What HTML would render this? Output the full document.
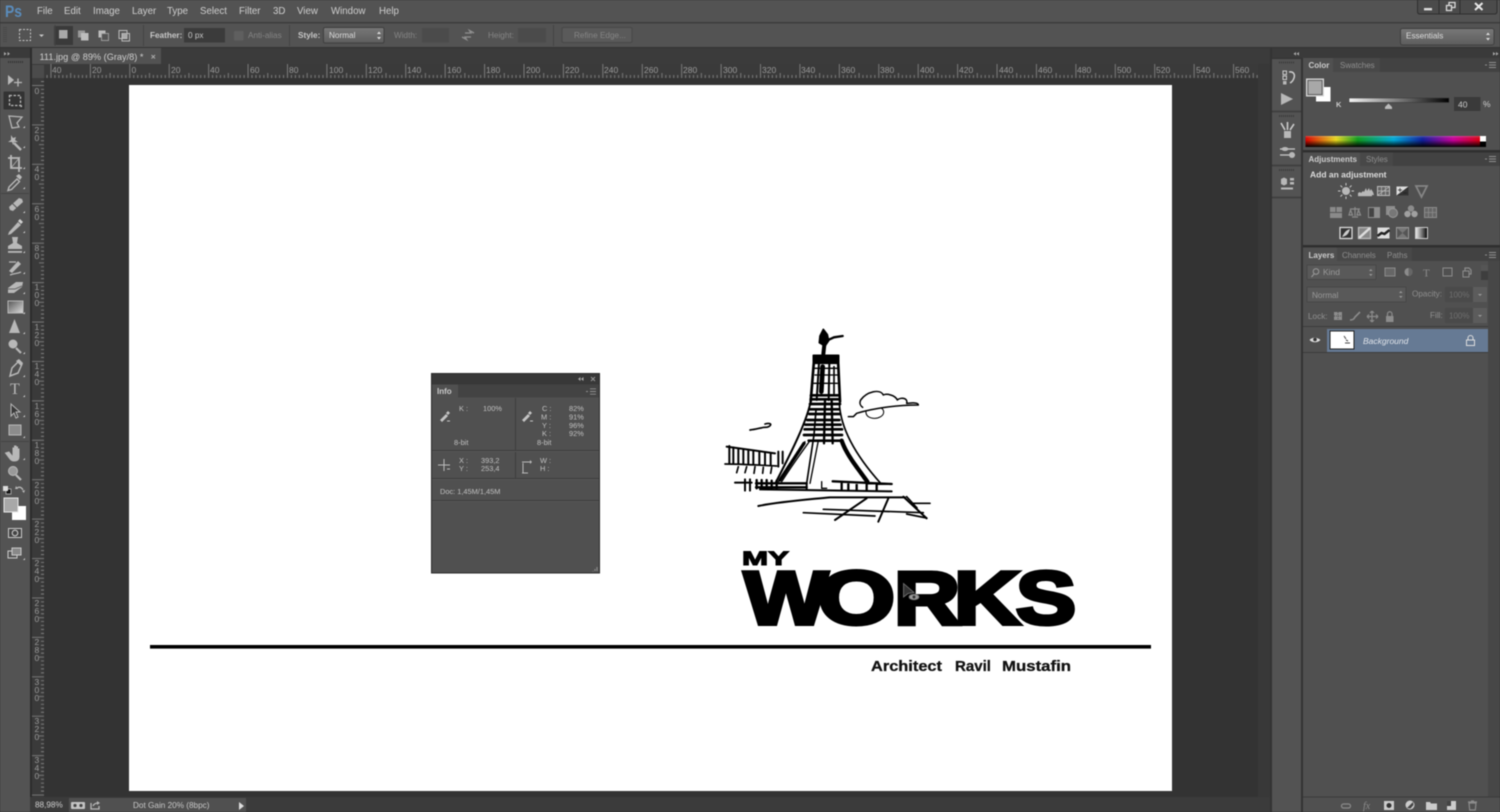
<!DOCTYPE html>
<html><head><meta charset="utf-8"><style>
html,body{margin:0;padding:0;width:1500px;height:812px;overflow:hidden;background:#333}
svg{display:block;filter:blur(.5px)}
svg svg{filter:none}
text{font-family:"Liberation Sans",sans-serif;font-size:8.5px;fill:#c8c8c8}
.m text{font-size:9.7px;fill:#cfcfcf}
.d text{fill:#858585}
.r text{fill:#9a9a9a;font-size:8.5px}
.i text{font-size:7.4px;fill:#c0c0c0}
.t text{font-size:8px}
.ic{fill:#b8b8b8;stroke:none}
.is{fill:none;stroke:#b8b8b8;stroke-width:1.3}
.dim{fill:#8c8c8c}
.dims{fill:none;stroke:#8c8c8c;stroke-width:1.2}
.w{font-weight:bold;fill:#000;stroke:#000;stroke-width:4;stroke-linejoin:miter;font-size:75px}
</style></head><body>
<svg width="1500" height="812" viewBox="0 0 1500 812" xmlns="http://www.w3.org/2000/svg">
<defs>
<pattern id="hr" x="129.3" y="64" width="39.42" height="14" patternUnits="userSpaceOnUse">
<path d="M.5 0V14M20.2 9V14M4.4 11V14M8.4 11V14M12.3 11V14M16.3 11V14M24.1 11V14M28.1 11V14M32 11V14M36 11V14" stroke="#8a8a8a" stroke-width=".8"/>
</pattern>
<pattern id="vr" x="32" y="85" width="12" height="39.42" patternUnits="userSpaceOnUse">
<path d="M0 .5H12M7 20.2H12M9 4.4H12M9 8.4H12M9 12.3H12M9 16.3H12M9 24.1H12M9 28.1H12M9 32H12M9 36H12" stroke="#8a8a8a" stroke-width=".8"/>
</pattern>
<linearGradient id="sel" x1="0" y1="0" x2="0" y2="1"><stop offset="0" stop-color="#787878"/><stop offset="1" stop-color="#5d5d5d"/></linearGradient>
<linearGradient id="sld" x1="0" y1="0" x2="1" y2="0"><stop offset="0" stop-color="#f4f4f4"/><stop offset="1" stop-color="#000"/></linearGradient>
<linearGradient id="spec" x1="0" y1="0" x2="1" y2="0">
<stop offset="0" stop-color="#e00000"/><stop offset=".17" stop-color="#f0e020"/><stop offset=".29" stop-color="#10a020"/><stop offset=".49" stop-color="#00b0e0"/><stop offset=".65" stop-color="#1020a0"/><stop offset=".82" stop-color="#d000a0"/><stop offset=".97" stop-color="#e00010"/><stop offset="1" stop-color="#e00010"/></linearGradient>
<linearGradient id="fade" x1="0" y1="0" x2="0" y2="1"><stop offset="0" stop-color="#fff" stop-opacity=".25"/><stop offset=".35" stop-color="#000" stop-opacity="0"/><stop offset="1" stop-color="#000" stop-opacity="1"/></linearGradient>
<linearGradient id="gr" x1="0" y1="0" x2="1" y2="1"><stop offset="0" stop-color="#555"/><stop offset="1" stop-color="#ddd"/></linearGradient>
</defs>

<!-- base -->
<rect width="1500" height="812" fill="#535353"/>
<rect y="22" width="1500" height="1.5" fill="#3d3d3d"/>
<rect y="47" width="1500" height="1.5" fill="#333"/>

<!-- menu -->
<text x="5" y="17" textLength="17" lengthAdjust="spacingAndGlyphs" style="font-size:17px;font-weight:bold;fill:#5a8cbc">Ps</text>
<g class="m">
<text x="37" y="14">File</text><text x="64" y="14">Edit</text><text x="93" y="14">Image</text><text x="132" y="14">Layer</text><text x="167" y="14">Type</text><text x="200" y="14">Select</text><text x="239" y="14">Filter</text><text x="273" y="14">3D</text><text x="297" y="14">View</text><text x="331" y="14">Window</text><text x="379" y="14">Help</text>
</g>

<!-- window buttons -->
<path d="M1417.5 0V11.5Q1417.5 14 1420 14H1494.5Q1497 14 1497 11.5V0" fill="#4b4b4b" stroke="#2e2e2e"/>
<path d="M1439 0V14M1460 0V14" stroke="#2e2e2e"/>
<rect x="1424" y="8" width="8" height="2.4" fill="#ddd"/>
<path d="M1446.5 5.5h5v5h-5zM1449 5V2.5h6v5h-3" fill="none" stroke="#ddd" stroke-width="1.3"/>
<path d="M1475 3l7.5 7M1482.5 3l-7.5 7" stroke="#e8e8e8" stroke-width="2"/>

<!-- options bar -->
<path d="M4 27v16M6 27v16" stroke="#3f3f3f" stroke-dasharray="1 1"/>
<rect x="19.5" y="29.5" width="11" height="11" fill="none" stroke="#c8c8c8" stroke-dasharray="2 1.5"/>
<path d="M39 34.5h5l-2.5 2.5z" fill="#c8c8c8"/>
<rect x="54" y="26" width="19" height="19" fill="#3a3a3a"/>
<rect x="59" y="30" width="8.5" height="8.5" fill="#a8a8a8"/>
<rect x="78" y="30.5" width="7" height="7" fill="#999"/><rect x="81" y="33" width="7.5" height="7.5" fill="#bdbdbd"/>
<rect x="98.5" y="30.5" width="7" height="7" fill="#bdbdbd"/><rect x="101.5" y="33.5" width="7" height="7" fill="#555" stroke="#aaa" stroke-width=".8"/>
<rect x="119" y="30.5" width="8" height="8" fill="none" stroke="#bbb"/><rect x="122" y="33.5" width="7.5" height="7.5" fill="none" stroke="#bbb"/><rect x="122.5" y="33.5" width="4.5" height="4.5" fill="#aaa"/>
<path d="M55 25V46M143.5 25V46M289.5 25V46M553.5 25V46" stroke="#444"/>
<text x="150" y="38" style="font-weight:bold;font-size:8.2px">Feather:</text>
<rect x="184" y="28" width="41" height="14.5" fill="#3b3b3b"/>
<text x="188" y="38" style="font-size:8.2px">0 px</text>
<rect x="234" y="31" width="9.5" height="9.5" rx="1" fill="#5f5f5f"/>
<rect x="562" y="27.5" width="70" height="15" rx="1.5" fill="#5a5a5a" stroke="#474747"/>
<g class="d"><text x="248" y="38" style="font-size:8.2px">Anti-alias</text><text x="394" y="38" style="font-size:8.2px">Width:</text><text x="488" y="38" style="font-size:8.2px">Height:</text><text x="574" y="38" style="font-size:8.2px">Refine Edge...</text></g>
<text x="298" y="38" style="font-weight:bold;font-size:8.2px">Style:</text>
<rect x="323.5" y="27.5" width="60.5" height="15.5" rx="1.5" fill="url(#sel)" stroke="#3f3f3f"/>
<text x="329" y="38" style="font-size:8.2px;fill:#ddd">Normal</text>
<path d="M377 34l2-2.5 2 2.5zM377 37l2 2.5 2-2.5z" fill="#ddd"/>
<rect x="422" y="28" width="27" height="14.5" fill="#4b4b4b"/>
<rect x="518" y="28" width="28" height="14.5" fill="#4b4b4b"/>
<path d="M465 33h6l-1.5-2.5L474 33M471 37h-6l1.5 2.5L462 37" fill="none" stroke="#8f8f8f" stroke-width="1.3"/>
<rect x="1400.5" y="28.5" width="93.5" height="16.5" rx="2" fill="url(#sel)" stroke="#3f3f3f"/>
<text x="1406" y="38.5" style="font-size:8.2px;fill:#ddd">Essentials</text>
<path d="M1486 35l2-2.5 2 2.5zM1486 38l2 2.5 2-2.5z" fill="#ddd"/>

<!-- document area -->
<rect x="30" y="48" width="1242" height="764" fill="#333"/>
<rect x="32" y="48" width="1238" height="16" fill="#3b3b3b"/>
<rect x="32" y="48" width="129" height="16" fill="#525252"/>
<text x="39.5" y="60" style="font-size:9.2px;fill:#cfcfcf">111.jpg @ 89% (Gray/8) *</text>
<path d="M151.5 55l3.5 3.5M155 55l-3.5 3.5" stroke="#aaa"/>
<rect x="32" y="64" width="1226" height="14" fill="#3a3a3a"/>
<rect x="32" y="65" width="12" height="13" fill="#4b4b4b"/>
<rect x="44" y="64" width="1214" height="14" fill="url(#hr)"/>
<rect x="32" y="78" width="12" height="719" fill="#3a3a3a"/>
<rect x="32" y="78" width="12" height="719" fill="url(#vr)"/>
<rect x="1258" y="64" width="12" height="733" fill="#383838"/>
<g class="r">
<text x="52" y="73">40</text><text x="92" y="73">20</text><text x="131.5" y="73">0</text><text x="171" y="73">20</text><text x="210" y="73">40</text><text x="250" y="73">60</text><text x="289" y="73">80</text><text x="329" y="73">100</text><text x="368" y="73">120</text><text x="407" y="73">140</text><text x="447" y="73">160</text><text x="486" y="73">180</text><text x="526" y="73">200</text><text x="565" y="73">220</text><text x="604" y="73">240</text><text x="644" y="73">260</text><text x="683" y="73">280</text><text x="723" y="73">300</text><text x="762" y="73">320</text><text x="801" y="73">340</text><text x="841" y="73">360</text><text x="880" y="73">380</text><text x="920" y="73">400</text><text x="959" y="73">420</text><text x="999" y="73">440</text><text x="1038" y="73">460</text><text x="1077" y="73">480</text><text x="1117" y="73">500</text><text x="1156" y="73">520</text><text x="1196" y="73">540</text><text x="1235" y="73">560</text>
<text x="34.5" y="94">0</text>
<text x="34.5" y="133">2</text><text x="34.5" y="141">0</text>
<text x="34.5" y="172">4</text><text x="34.5" y="180">0</text>
<text x="34.5" y="212">6</text><text x="34.5" y="220">0</text>
<text x="34.5" y="251">8</text><text x="34.5" y="259">0</text>
<text x="34.5" y="290">1</text><text x="34.5" y="298">0</text><text x="34.5" y="306">0</text>
<text x="34.5" y="330">1</text><text x="34.5" y="338">2</text><text x="34.5" y="346">0</text>
<text x="34.5" y="369">1</text><text x="34.5" y="377">4</text><text x="34.5" y="385">0</text>
<text x="34.5" y="409">1</text><text x="34.5" y="417">6</text><text x="34.5" y="425">0</text>
<text x="34.5" y="448">1</text><text x="34.5" y="456">8</text><text x="34.5" y="464">0</text>
<text x="34.5" y="488">2</text><text x="34.5" y="496">0</text><text x="34.5" y="504">0</text>
<text x="34.5" y="527">2</text><text x="34.5" y="535">2</text><text x="34.5" y="543">0</text>
<text x="34.5" y="566">2</text><text x="34.5" y="574">4</text><text x="34.5" y="582">0</text>
<text x="34.5" y="606">2</text><text x="34.5" y="614">6</text><text x="34.5" y="622">0</text>
<text x="34.5" y="645">2</text><text x="34.5" y="653">8</text><text x="34.5" y="661">0</text>
<text x="34.5" y="685">3</text><text x="34.5" y="693">0</text><text x="34.5" y="701">0</text>
<text x="34.5" y="724">3</text><text x="34.5" y="732">2</text><text x="34.5" y="740">0</text>
<text x="34.5" y="763">3</text><text x="34.5" y="771">4</text><text x="34.5" y="779">0</text>
</g>

<!-- page -->
<rect x="129" y="85" width="1043" height="706" fill="#fff"/>

<!-- tower drawing -->
<svg x="710" y="320" width="230" height="210" viewBox="0 0 690 630">
<g fill="none" stroke="#000" stroke-width="5" stroke-linecap="round" stroke-linejoin="round">
<path fill="#000" d="M340 28L330 48 328 68 345 78 356 62 352 44Z"/>
<path d="M350 62L372 52 398 48" stroke-width="7"/>
<path d="M343 74L340 102" stroke-width="12"/>
<path fill="#000" d="M310 106H386V130H310Z"/>
<path d="M312 122L302 245M384 118L390 245" stroke-width="8"/>
<path d="M327 128L320 240M358 128L356 240" stroke-width="6"/>
<path d="M338 140L334 215" stroke-width="14"/>
<path d="M372 140V220" stroke-width="5"/>
<path d="M312 145H384M315 165H382M312 190H382" stroke-width="4"/>
<path d="M303 226H387M302 238H388M300 252H390M300 268H387M298 282H390M292 300H388M286 314H392M284 328H396M282 345H396M296 362H392" stroke-width="8"/>
<path d="M303 240C292 300 250 385 196 490" stroke-width="6"/>
<path d="M318 270L312 345 290 490" stroke-width="5"/>
<path d="M345 240L342 370M365 240L368 370" stroke-width="7"/>
<path d="M388 250C392 330 440 410 512 490" stroke-width="5"/>
<path d="M300 362C280 390 250 430 215 485M285 365C265 400 240 440 205 485" stroke-width="4"/>
<path d="M282 370L210 480" stroke-width="10" stroke-dasharray="7 3"/>
<path d="M325 362L300 490" stroke-width="4"/>
<path d="M395 362C410 405 440 440 472 485" stroke-width="13" stroke-dasharray="14 2"/>
<path d="M50 380L195 400" stroke-width="6"/>
<path d="M45 432C100 432 150 436 200 438" stroke-width="5"/>
<path d="M58 378V430M70 382V430M85 388V432M100 390V432M115 392V432M130 394V432M148 396V434M165 398V434M182 400V436M205 395V440M218 395V430" stroke-width="6"/>
<path d="M85 440L80 458M110 440L105 458M135 440L132 460M160 442L158 460M185 442L182 460" stroke-width="5"/>
<path d="M75 488H125M105 478V512M120 478V512" stroke-width="6"/>
<path d="M140 480V505M155 480V505M170 480V505M185 482V505M200 482V505M138 490H290M138 502H290" stroke-width="7"/>
<path d="M290 490V508M150 508L545 514" stroke-width="6"/>
<path d="M335 485V505H350" stroke-width="4"/>
<path d="M368 484L545 492M395 490V508M415 490V510M440 488V510M470 490V510M500 490V510" stroke-width="7"/>
<path d="M145 558C210 545 280 540 360 532L585 532" stroke-width="6"/>
<path d="M580 530L650 595" stroke-width="6"/>
<path d="M590 530L622 565M610 550L660 550" stroke-width="5" stroke-dasharray="4 2"/>
<path d="M470 535L375 600M535 535L505 605" stroke-width="6"/>
<path d="M280 578L495 588M340 568L640 578M590 582L650 594" stroke-width="5"/>
<path d="M120 330C140 328 155 322 165 322 185 322 190 305 165 312" stroke-width="5"/>
<path d="M415 290L430 290 440 280C490 265 560 255 625 255 625 245 595 250 590 250 595 232 570 232 562 240 555 225 530 220 520 225 510 205 470 215 452 240 447 250 452 258 458 262" stroke-width="4.500"/>
<path d="M468 272C465 295 495 300 512 290 525 282 522 270 515 265" stroke-width="3"/>
</g>
</svg>

<!-- MY WORKS -->
<text x="742" y="565" textLength="47" lengthAdjust="spacingAndGlyphs" style="font-size:19px;font-weight:bold;fill:#000;stroke:#000;stroke-width:1">MY</text>
<text class="w" x="744" y="624" textLength="84" lengthAdjust="spacingAndGlyphs" style="fill:#000">W</text>
<text class="w" x="818" y="624" textLength="77" lengthAdjust="spacingAndGlyphs" style="fill:#000">O</text>
<text class="w" x="894" y="624" textLength="66" lengthAdjust="spacingAndGlyphs" style="fill:#000">R</text>
<text class="w" x="954" y="624" textLength="66" lengthAdjust="spacingAndGlyphs" style="fill:#000">K</text>
<text class="w" x="1016" y="624" textLength="60" lengthAdjust="spacingAndGlyphs" style="fill:#000">S</text>
<rect x="150" y="645" width="1001" height="3.6" fill="#000"/>
<text x="871" y="671" textLength="71" lengthAdjust="spacingAndGlyphs" style="font-size:15px;font-weight:bold;fill:#111;stroke:#111;stroke-width:.3">Architect</text>
<text x="955" y="671" textLength="36" lengthAdjust="spacingAndGlyphs" style="font-size:15px;font-weight:bold;fill:#111;stroke:#111;stroke-width:.3">Ravil</text>
<text x="1002" y="671" textLength="69" lengthAdjust="spacingAndGlyphs" style="font-size:15px;font-weight:bold;fill:#111;stroke:#111;stroke-width:.3">Mustafin</text>
<path d="M903.5 583.5V597L908 593.5 914 592.5Z" fill="#333" stroke="#777" stroke-width=".8"/>
<ellipse cx="914" cy="597" rx="5" ry="2.800" fill="#999" stroke="#666" stroke-width=".8"/>
<circle cx="914" cy="597" r="1.500" fill="#333"/>

<!-- Info panel -->
<rect x="431.5" y="373.5" width="168" height="199.5" fill="#505050" stroke="#2b2b2b"/>
<rect x="432" y="374" width="167" height="10.5" fill="#383838"/>
<rect x="432" y="384.5" width="167" height="13" fill="#434343"/>
<rect x="432" y="384.5" width="26" height="13" fill="#505050"/>
<path d="M578 379l2.500-2v4zM581 379l2.500-2v4z" fill="#aaa"/>
<path d="M591 377l4 4M595 377l-4 4" stroke="#999"/>
<path d="M586 391.500h2M590 388.800h6M590 391.500h6M590 394.200h6" stroke="#aaa" stroke-width=".7"/>
<text x="437" y="394" style="font-weight:bold;font-size:8px;fill:#ccc">Info</text>
<path d="M515.5 398V450M515.5 452V478M432 450.5H599M432 478.5H599M432 500.5H599" stroke="#3e3e3e"/>
<path d="M432 451.5H599M432 479.5H599M432 501.5H599" stroke="#5c5c5c" stroke-width=".6"/>
<g class="i">
<text x="459" y="411">K :</text><text x="483" y="411">100%</text>
<text x="454" y="445">8-bit</text>
<text x="542" y="411">C :</text><text x="569" y="411">82%</text>
<text x="541" y="419.5">M :</text><text x="569" y="419.5">91%</text>
<text x="542" y="428">Y :</text><text x="569" y="428">96%</text>
<text x="542" y="436">K :</text><text x="569" y="436">92%</text>
<text x="537" y="445">8-bit</text>
<text x="459" y="463">X :</text><text x="481" y="463">393,2</text>
<text x="459" y="471">Y :</text><text x="481" y="471">253,4</text>
<text x="540" y="463">W :</text><text x="540" y="471">H :</text>
<text x="440" y="494">Doc: 1,45M/1,45M</text>
</g>
<path d="M440 420l6-6 2 2-6 6zM446 413l2-2 2 2-2 2z" fill="#c4c4c4"/><path d="M447 421h3" stroke="#c4c4c4"/>
<path d="M522 420l6-6 2 2-6 6zM528 413l2-2 2 2-2 2z" fill="#c4c4c4"/><path d="M530 421h3" stroke="#c4c4c4"/>
<path d="M438 465H450M444 459V471M447 469h3" stroke="#bbb"/>
<path d="M522 462h8M523 463v10M522 473h6" stroke="#bbb" stroke-dasharray="2 0"/>
<path d="M530 460l2 2-2 2z" fill="#bbb"/>
<path d="M597 567v4M595 569v2M593 571v.5" stroke="#888" stroke-width="1.2"/>

<!-- Toolbar -->
<rect x="0" y="48" width="30" height="10" fill="#3a3a3a"/>
<rect x="30" y="48" width="2" height="764" fill="#2c2c2c"/>
<path d="M4 52l2.500 1.800L4 55.600zM7.500 52l2.500 1.800-2.500 1.800z" fill="#aaa"/>
<path d="M8 62H23" stroke="#333" stroke-dasharray="1 1" stroke-width="2"/>
<!-- move -->
<path d="M8 75V85L14 80Z" class="ic"/><path d="M14 82.500H22M18 78.500V86.500" class="is"/>
<!-- marquee -->
<rect x="3.500" y="91.500" width="21" height="18" fill="#333" rx="1"/>
<rect x="9.500" y="95.500" width="11" height="10" fill="none" stroke="#bbb" stroke-width="1.300" stroke-dasharray="2.500 1.500"/>
<!-- lasso -->
<path d="M9 116L22 117 17 123 19 127 12 128Z" class="is"/>
<!-- wand -->
<path d="M14 143l7 7" stroke="#b8b8b8" stroke-width="2.500"/><path d="M11 135l2 3 3-1-1 3 3 2-4 0-1 3-1-3-4 0 3-2z" class="ic"/>
<!-- crop -->
<path d="M11 155V168H22M8 158H19V172" fill="none" stroke="#b8b8b8" stroke-width="1.800"/><path d="M11 168L20 157" stroke="#b8b8b8" stroke-width=".7"/>
<!-- eyedropper -->
<path d="M9 187l8-8 2.500 2.500-8 8-3.500 1z" fill="none" stroke="#b8b8b8" stroke-width="1.400"/><path d="M16 176l3-2 3 3-2 3z" class="ic"/>
<path d="M1 193.500H29" stroke="#444"/>
<!-- heal -->
<path d="M10 210l-1-3 10-9 3 1 1 3-10 9z" class="ic"/><path d="M12 203l5 5" stroke="#555"/>
<!-- brush -->
<path d="M9 232l9-10 3 3-10 9-3 1z" class="ic"/><path d="M18 221l2-2 3 3-2 2z" fill="#d0d0d0"/>
<!-- stamp -->
<path d="M12 237h6l-1 6 5 3v3H8v-3l5-3z" class="ic"/><rect x="8" y="251" width="14" height="1.800" fill="#b8b8b8"/>
<!-- history brush -->
<path d="M9 271l9-10 3 3-9 9z" class="ic"/><path d="M9 262h7M10 275c5-2 7-1 11-3" class="is"/>
<!-- eraser -->
<path d="M8 288l8-6h7l-1 5-8 6H8z" class="ic"/><path d="M8 289h7l7-3" stroke="#666" fill="none"/>
<!-- gradient -->
<rect x="8" y="301" width="15" height="12" fill="url(#gr)" stroke="#b8b8b8"/>
<!-- blur -->
<path d="M14.500 319L20 333H9Z" class="ic"/>
<!-- dodge -->
<circle cx="13" cy="344" r="4.500" class="ic"/><path d="M16 348l5 5" stroke="#b8b8b8" stroke-width="2.200"/>
<!-- pen -->
<path d="M19 361l3 3-4 9-8 3 2-8z" fill="none" stroke="#b8b8b8" stroke-width="1.500"/><path d="M16 361l3-2 4 4-2 3z" class="ic"/>
<!-- type -->
<text x="10" y="394" style="font-family:'Liberation Serif',serif;font-size:16px;fill:#b8b8b8">T</text>
<!-- path select -->
<path d="M11 404V416L14 413 16 418 18 417 16 412H20Z" fill="#3a3a3a" stroke="#b8b8b8"/>
<!-- rect -->
<rect x="9" y="425" width="12" height="10" fill="#8c8c8c" stroke="#b8b8b8"/>
<path d="M1 441.500H29" stroke="#444"/>
<!-- hand -->
<path d="M9 452l4 5V448h1.500v5V446h1.500v7V447h1.500v6V449h1.500v8c0 3-2 4-5 4s-4-2-5.500-4l-3-4z" fill="#b8b8b8" stroke="#b8b8b8"/>
<!-- zoom -->
<circle cx="13" cy="471" r="4.500" fill="#999" stroke="#bbb"/><path d="M16 475l5 5" stroke="#b8b8b8" stroke-width="2.200"/>
<!-- small swatches -->
<rect x="6" y="489" width="5" height="5" fill="#111" stroke="#ccc" stroke-width=".7"/><rect x="3" y="486" width="5" height="5" fill="#ddd"/>
<path d="M17 488c3-2 5 0 6 2" class="is"/><path d="M16 486l2 3-3 0zM22 491l3-1-1 3z" class="ic"/>
<!-- fg bg -->
<rect x="12" y="506" width="14" height="14" fill="#fff"/>
<rect x="4" y="498" width="14" height="14" fill="#a8a8a8" stroke="#e8e8e8" stroke-width="1"/>
<!-- quick mask -->
<rect x="8.500" y="528.500" width="13" height="9" fill="#444" stroke="#ccc"/><circle cx="15" cy="533" r="2.800" fill="none" stroke="#ccc" stroke-width="1.100"/>
<!-- screen mode -->
<rect x="8" y="551" width="9" height="7" fill="#555" stroke="#ccc"/><rect x="12" y="548" width="9" height="7" fill="#888" stroke="#ccc"/>
<!-- corner tris -->
<path d="M22 105v2h-2zM25 126v2h-2zM25 146v2h-2zM25 167v2h-2zM25 187v2h-2zM25 211v2h-2zM25 231v2h-2zM25 251v2h-2zM25 272v2h-2zM25 292v2h-2zM25 312v2h-2zM25 332v2h-2zM25 352v2h-2zM25 375v2h-2zM25 395v2h-2zM25 415v2h-2zM25 436v2h-2zM25 458v2h-2zM25 558v2h-2z" fill="#ccc"/>

<!-- status bar -->
<rect x="30" y="797" width="1242" height="15" fill="#3b3b3b"/>
<rect x="69" y="798" width="177" height="14" fill="#505050"/>
<text x="35" y="807.500" style="font-size:8.200px;fill:#cfcfcf">88,98%</text>
<text x="133" y="808" style="font-size:8.200px;fill:#c8c8c8">Dot Gain 20% (8bpc)</text>
<rect x="71" y="802" width="14" height="7" rx="1" fill="#c4c4c4"/><circle cx="75" cy="805.500" r="1.600" fill="#444"/><circle cx="81" cy="805.500" r="1.600" fill="#444"/>
<path d="M91 803V809H99V806M93 806c1-2 3-3 5-3" class="is"/><path d="M97 801l3 2-3 2z" class="ic"/>
<path d="M239 802l5 4-5 4z" fill="#ddd"/>

<!-- Right dock -->
<rect x="1270" y="48" width="230" height="764" fill="#333"/>
<rect x="1272" y="48" width="228" height="10" fill="#3a3a3a"/>
<path d="M1296 52l-2.500 1.800 2.500 1.800zM1299 52l-2.500 1.800 2.500 1.800zM1493 52l2.500 1.800-2.500 1.800zM1496 52l2.500 1.800-2.500 1.800z" fill="#aaa"/>
<rect x="1272" y="59" width="29" height="753" fill="#535353"/>
<path d="M1272 111.500H1301M1272 165.500H1301M1272 197.500H1301" stroke="#3c3c3c" stroke-width="1.500"/>
<path d="M1279 62.500H1294M1279 116H1294M1279 170H1294" stroke="#333" stroke-dasharray="1 1" stroke-width="1.600"/>
<!-- history -->
<rect x="1283" y="71" width="3.500" height="3.500" fill="none" stroke="#ccc"/><rect x="1283" y="76" width="3.500" height="3.500" fill="none" stroke="#ccc"/><rect x="1283" y="81" width="3.500" height="3.500" class="ic"/>
<path d="M1289 72c5-1 6 3 5 6s-2 4-4 5" fill="none" stroke="#ccc" stroke-width="1.500"/>
<!-- play -->
<path d="M1281 93L1293 99 1281 105Z" class="ic"/>
<!-- brushes -->
<rect x="1284" y="131" width="7" height="7" class="ic"/><path d="M1285 130L1281 123M1287.500 130V122M1290 130L1294 124" stroke="#ccc" stroke-width="1.600"/>
<!-- brush presets -->
<path d="M1280 149H1295M1280 155H1295" stroke="#ccc" stroke-width="1.300"/><ellipse cx="1285" cy="149" rx="3.500" ry="2" class="ic"/><circle cx="1292" cy="155" r="3" class="ic"/>
<!-- 3d props -->
<path d="M1281 179l3-1.500 3 1.500v5l-3 1.500-3-1.500z" class="ic"/><rect x="1290" y="178" width="4" height="2.500" class="ic"/><rect x="1290" y="182" width="4" height="2.500" class="ic"/><rect x="1281" y="187.500" width="12" height="2" class="ic"/>

<!-- panels -->
<rect x="1303" y="58" width="197" height="754" fill="#505050"/>
<rect x="1303" y="58" width="197" height="14" fill="#424242"/>
<rect x="1303" y="150" width="197" height="2.500" fill="#2f2f2f"/>
<rect x="1303" y="152.500" width="197" height="13.500" fill="#424242"/>
<rect x="1303" y="245" width="197" height="2.500" fill="#2f2f2f"/>
<rect x="1303" y="247.500" width="197" height="13.500" fill="#424242"/>
<rect x="1303" y="58" width="30" height="14" fill="#505050"/>
<rect x="1333" y="58" width="47" height="14" fill="#484848"/>
<rect x="1303" y="152.500" width="57" height="13.500" fill="#505050"/>
<rect x="1360" y="152.500" width="33" height="13.500" fill="#484848"/>
<rect x="1303" y="247.500" width="34" height="13.500" fill="#505050"/>
<rect x="1337" y="247.500" width="43" height="13.500" fill="#484848"/>
<rect x="1380" y="247.500" width="32" height="13.500" fill="#484848"/>
<g class="t">
<text x="1308.500" y="68" style="font-weight:bold;fill:#ccc">Color</text>
<text x="1340" y="68" style="fill:#8e8e8e">Swatches</text>
<text x="1308.500" y="162" style="font-weight:bold;fill:#ccc">Adjustments</text>
<text x="1366" y="162" style="fill:#8e8e8e">Styles</text>
<text x="1308.500" y="258" style="font-weight:bold;fill:#ccc">Layers</text>
<text x="1342" y="258" style="fill:#8e8e8e">Channels</text>
<text x="1387" y="258" style="fill:#8e8e8e">Paths</text>
</g>
<path d="M1485 65h2M1489 62.500h7M1489 65h7M1489 67.500h7M1485 159h2M1489 156.500h7M1489 159h7M1489 161.500h7M1485 255h2M1489 252.500h7M1489 255h7M1489 257.500h7" stroke="#aaa" stroke-width=".7"/>
<!-- color -->
<rect x="1316" y="87" width="14.500" height="14.500" fill="#fff"/>
<rect x="1306.500" y="79" width="17" height="17" fill="#a8a8a8" stroke="#ddd"/>
<rect x="1308" y="80.500" width="14" height="14" fill="#a8a8a8" stroke="#555" stroke-width=".8"/>
<text x="1336" y="107" style="font-weight:bold;font-size:7.500px;fill:#ccc">K</text>
<rect x="1349" y="98" width="100" height="4.500" fill="url(#sld)" stroke="#3a3a3a" stroke-width=".6"/>
<path d="M1388.500 103.500l3.500 3.500v2h-7v-2z" fill="#bbb"/>
<rect x="1454" y="97" width="26.500" height="14" fill="#3a3a3a"/>
<text x="1458" y="107.500" style="font-size:8.500px;fill:#ccc">40</text>
<text x="1483" y="107" style="font-size:8.500px;fill:#ccc">%</text>
<rect x="1305.500" y="136" width="180" height="11" fill="url(#spec)"/>
<rect x="1305.500" y="136" width="180" height="11" fill="url(#fade)"/>
<rect x="1480" y="136" width="6" height="5.500" fill="#fff"/><rect x="1480" y="141.500" width="6" height="5.500" fill="#000"/>
<!-- adjustments -->
<text x="1310" y="177.500" style="font-weight:bold;font-size:8.500px;fill:#ddd">Add an adjustment</text>
<circle cx="1346" cy="191" r="4" class="ic"/><path d="M1346 183v2.500M1346 196.500v2.500M1338 191h2.500M1351.500 191h2.500M1340.500 185.500l1.800 1.800M1349.700 194.700l1.800 1.800M1340.500 196.500l1.800-1.800M1349.700 187.300l1.800-1.800" stroke="#ccc"/>
<path d="M1358 195v-2l2-1 1 1 2-2 1 1 2-4 1 3 2-3 1 3 1-2 2 3 1 3z" class="ic"/>
<rect x="1358" y="195" width="14" height="1.200" class="ic"/>
<rect x="1377.500" y="186.500" width="12" height="9" fill="#666" stroke="#bbb"/><path d="M1378 195l11-8M1381.500 186.500V195M1385.500 186.500V195M1378 191h11" stroke="#bbb" stroke-width=".7"/>
<rect x="1396.500" y="186.500" width="12" height="9" fill="#ddd"/><path d="M1396.500 195.500L1408.500 186.500V195.500Z" fill="#333"/><path d="M1398 190h4M1400 188v4M1403 193h4" stroke="#222" stroke-width=".7"/>
<path d="M1416 186h11l-5.500 11z" fill="none" stroke="#858585" stroke-width="1.800"/>
<g>
<rect x="1330" y="207" width="12" height="11" fill="#8a8a8a"/><path d="M1330 212.500h12M1336 207v5" stroke="#555"/>
<path d="M1355 207v9M1350 209h10M1349 215l1.500-5 2 5zM1357 215l1.500-5 2 5zM1352 217h6" class="dims"/>
<rect x="1368.500" y="207.500" width="11" height="10" fill="#8e8e8e" stroke="#8e8e8e"/><rect x="1369" y="208" width="5" height="9" fill="#444"/>
<rect x="1386" y="206" width="9" height="9" fill="#8c8c8c"/><circle cx="1393" cy="213" r="4.500" fill="#777" stroke="#999"/>
<circle cx="1411" cy="208.500" r="3.200" class="dim"/><circle cx="1407.500" cy="214" r="3.200" fill="#a0a0a0"/><circle cx="1414.500" cy="214" r="3.200" fill="#a0a0a0"/>
<rect x="1424.500" y="207.500" width="12" height="10" fill="#666" stroke="#8c8c8c"/><path d="M1424.500 212.500h12M1428.500 207.500v10M1432.500 207.500v10" stroke="#8c8c8c" stroke-width=".8"/>
</g>
<rect x="1340" y="227.500" width="12" height="11" fill="#333" stroke="#ddd" stroke-width="1.300"/><path d="M1342 237c2-4 4-7 8-8-1 4-3 7-8 8z" fill="#ccc"/>
<rect x="1358.500" y="227.500" width="12" height="11" fill="#888" stroke="#bbb" stroke-width="1.300"/><path d="M1359 238l11-10" stroke="#ddd" stroke-width="2.500"/>
<rect x="1377.500" y="227.500" width="12" height="11" fill="#ddd"/><path d="M1377.500 236l4-3 3 1 5-4" stroke="#222" stroke-width="2.500" fill="none"/>
<rect x="1396.500" y="227.500" width="12" height="11" fill="#777" stroke="#999"/><path d="M1397 228l5.500 5 5.500-5v10l-5.500-5-5.500 5z" fill="#555"/>
<rect x="1415.500" y="227.500" width="12" height="11" fill="url(#sld)" stroke="#ccc"/>
<!-- layers controls -->
<rect x="1307" y="265" width="69" height="14.500" rx="1" fill="#595959" stroke="#474747"/>
<circle cx="1316" cy="271.500" r="2.800" fill="none" stroke="#999"/><path d="M1314 274l-2.500 3" stroke="#999"/>
<text x="1323" y="275" style="font-size:8.500px;fill:#999">Kind</text>
<path d="M1369 271l1.800-2 1.800 2zM1369 274l1.800 2 1.800-2z" fill="#999"/>
<rect x="1385" y="268" width="10" height="8" fill="#666" stroke="#8c8c8c"/>
<circle cx="1408.500" cy="272" r="4" fill="#8c8c8c"/><path d="M1408.500 268a4 4 0 0 1 0 8z" fill="#666"/>
<text x="1423" y="276.500" style="font-family:'Liberation Serif',serif;font-size:11px;fill:#8c8c8c">T</text>
<rect x="1443" y="268" width="9" height="8" fill="none" stroke="#8c8c8c"/>
<rect x="1463" y="271" width="6" height="6" fill="none" stroke="#8c8c8c"/><path d="M1465 271v-3h4l2 2v4h-2" class="dims"/>
<rect x="1481" y="265" width="7" height="15" fill="#3e3e3e"/><rect x="1481" y="265" width="7" height="6" fill="#555"/>
<rect x="1307" y="287" width="99" height="15" rx="1" fill="#595959" stroke="#474747"/>
<text x="1312" y="298" style="font-size:8.200px;fill:#999">Normal</text>
<path d="M1399 293l1.800-2 1.800 2zM1399 296l1.800 2 1.800-2z" fill="#999"/>
<text x="1412" y="296.500" style="font-size:8.200px;fill:#8e8e8e">Opacity:</text>
<rect x="1445" y="287" width="28" height="15" fill="#4a4a4a"/><text x="1449" y="297.500" style="font-size:8px;fill:#6f6f6f">100%</text>
<rect x="1473" y="287" width="14" height="15" fill="#5c5c5c"/><path d="M1478 294h4l-2 2z" fill="#999"/>
<text x="1308" y="319" style="font-size:8.200px;fill:#909090">Lock:</text>
<rect x="1334" y="312" width="8" height="8" fill="#8c8c8c"/><path d="M1334 316h8M1338 312v8" stroke="#555" stroke-dasharray="1 1"/>
<path d="M1350 320c3 0 4-1 5-3l5-5" fill="none" stroke="#8c8c8c" stroke-width="1.600"/>
<path d="M1372 311v11M1367 316.500h11M1372 311l-2 2M1372 311l2 2M1372 322l-2-2M1372 322l2-2M1367 316.500l2-2M1367 316.500l2 2M1378 316.500l-2-2M1378 316.500l-2 2" class="dims"/>
<rect x="1386" y="316" width="7.500" height="6" class="dim"/><path d="M1387.500 316v-2a2.200 2.200 0 0 1 4.500 0v2" class="dims"/>
<text x="1430" y="318" style="font-size:8.200px;fill:#909090">Fill:</text>
<rect x="1445" y="308" width="28" height="15" fill="#4a4a4a"/><text x="1449" y="318.500" style="font-size:8px;fill:#6f6f6f">100%</text>
<rect x="1473" y="308" width="14" height="15" fill="#5c5c5c"/><path d="M1478 315h4l-2 2z" fill="#999"/>
<!-- layer row -->
<rect x="1303" y="326" width="185" height="1" fill="#3c3c3c"/>
<rect x="1327" y="329" width="161" height="23" fill="#667a94"/>
<rect x="1488" y="261" width="12" height="536" fill="#474747"/>
<path d="M1309.500 340c2-3 8-3 11 0-3 3-8 3-11 0z" fill="#ddd"/><circle cx="1315" cy="339.500" r="1.800" fill="#333"/>
<rect x="1330" y="331" width="24" height="18" fill="#fff" stroke="#222"/>
<path d="M1344 336l2 3M1346 340l2 1M1345 343h5" stroke="#444" stroke-width="1"/>
<text x="1363" y="344" style="font-style:italic;font-size:8.500px;fill:#e0e4ea">Background</text>
<rect x="1466.500" y="340" width="8" height="5.500" fill="none" stroke="#ddd"/><path d="M1468 340v-2a2.500 2.500 0 0 1 5 0v2" fill="none" stroke="#ddd"/>
<path d="M1303 352.500H1488" stroke="#3c3c3c"/>
<rect x="1303" y="797" width="197" height="15" fill="#505050"/>
<path d="M1303 797H1500" stroke="#3a3a3a"/>
<!-- bottom icons -->
<path d="M1346 804h-2.500a2 2 0 0 0 0 4h3M1346 804h2.500a2 2 0 0 1 0 4h-3" class="dims"/>
<text x="1363" y="809" style="font-family:'Liberation Serif',serif;font-style:italic;font-size:10px;fill:#8c8c8c">fx</text>
<rect x="1384" y="801" width="10" height="9" fill="#ccc"/><circle cx="1389" cy="805.500" r="2.500" fill="#333"/>
<circle cx="1410" cy="805" r="4.500" fill="#ccc"/><path d="M1407 808l6-6 .5 3-3 3.500z" fill="#444"/>
<path d="M1426 802h4l1 1.500h6V810h-11z" fill="#ccc"/>
<path d="M1447 801h9v9h-9z" fill="#ccc"/><path d="M1447 801h4v5h-4z" fill="#444"/>
<path d="M1469 803h7l-.7 7h-5.600zM1468 802h9M1471 801h3" class="dims"/>
</svg>
</body></html>
